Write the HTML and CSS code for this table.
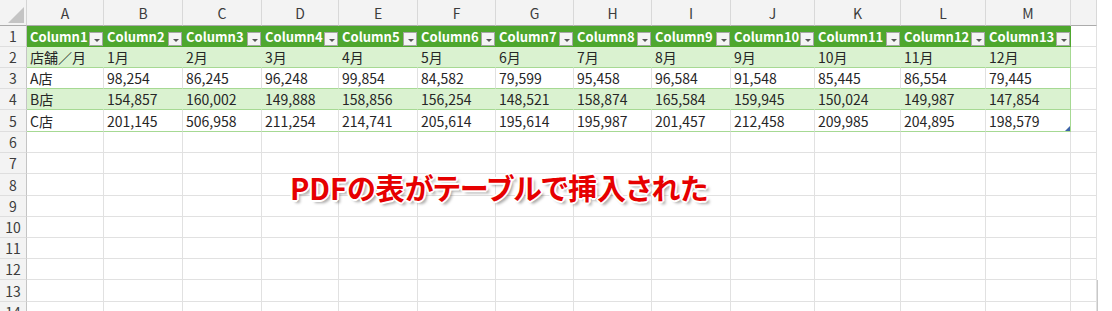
FILE: index.html
```html
<!DOCTYPE html>
<html lang="ja">
<head>
<meta charset="utf-8">
<title>Sheet</title>
<link rel="stylesheet" href="styles.css">
</head>
<body>
<div class="sheet">
  <!-- column headers -->
  <div class="corner"><span class="tri"></span></div>
  <div class="ch">A</div><div class="ch">B</div><div class="ch">C</div><div class="ch">D</div><div class="ch">E</div><div class="ch">F</div><div class="ch">G</div><div class="ch">H</div><div class="ch">I</div><div class="ch">J</div><div class="ch">K</div><div class="ch">L</div><div class="ch">M</div><div class="ch"></div><div class="fill"></div>

  <!-- row 1 -->
  <div class="rh">1</div>
  <div class="th"><span>Column1</span><span class="dd"></span></div>
  <div class="th"><span>Column2</span><span class="dd"></span></div>
  <div class="th"><span>Column3</span><span class="dd"></span></div>
  <div class="th"><span>Column4</span><span class="dd"></span></div>
  <div class="th"><span>Column5</span><span class="dd"></span></div>
  <div class="th"><span>Column6</span><span class="dd"></span></div>
  <div class="th"><span>Column7</span><span class="dd"></span></div>
  <div class="th"><span>Column8</span><span class="dd"></span></div>
  <div class="th"><span>Column9</span><span class="dd"></span></div>
  <div class="th"><span>Column10</span><span class="dd"></span></div>
  <div class="th"><span>Column11</span><span class="dd"></span></div>
  <div class="th"><span>Column12</span><span class="dd"></span></div>
  <div class="th last"><span>Column13</span><span class="dd"></span></div>
  <div class="c"></div><div class="fill"></div>

  <!-- row 2 -->
  <div class="rh">2</div>
  <div class="tb band">店舗／月</div><div class="tb band">1月</div><div class="tb band">2月</div><div class="tb band">3月</div><div class="tb band">4月</div><div class="tb band">5月</div><div class="tb band">6月</div><div class="tb band">7月</div><div class="tb band">8月</div><div class="tb band">9月</div><div class="tb band">10月</div><div class="tb band">11月</div><div class="tb band last">12月</div>
  <div class="c"></div><div class="fill"></div>

  <!-- row 3 -->
  <div class="rh">3</div>
  <div class="tb">A店</div><div class="tb">98,254</div><div class="tb">86,245</div><div class="tb">96,248</div><div class="tb">99,854</div><div class="tb">84,582</div><div class="tb">79,599</div><div class="tb">95,458</div><div class="tb">96,584</div><div class="tb">91,548</div><div class="tb">85,445</div><div class="tb">86,554</div><div class="tb last">79,445</div>
  <div class="c"></div><div class="fill"></div>

  <!-- row 4 -->
  <div class="rh">4</div>
  <div class="tb band">B店</div><div class="tb band">154,857</div><div class="tb band">160,002</div><div class="tb band">149,888</div><div class="tb band">158,856</div><div class="tb band">156,254</div><div class="tb band">148,521</div><div class="tb band">158,874</div><div class="tb band">165,584</div><div class="tb band">159,945</div><div class="tb band">150,024</div><div class="tb band">149,987</div><div class="tb band last">147,854</div>
  <div class="c"></div><div class="fill"></div>

  <!-- row 5 -->
  <div class="rh">5</div>
  <div class="tb">C店</div><div class="tb">201,145</div><div class="tb">506,958</div><div class="tb">211,254</div><div class="tb">214,741</div><div class="tb">205,614</div><div class="tb">195,614</div><div class="tb">195,987</div><div class="tb">201,457</div><div class="tb">212,458</div><div class="tb">209,985</div><div class="tb">204,895</div><div class="tb last end">198,579<span class="handle"></span></div>
  <div class="c"></div><div class="fill"></div>

  <!-- rows 6-14 -->
  <div class="rh">6</div><div class="c"></div><div class="c"></div><div class="c"></div><div class="c"></div><div class="c"></div><div class="c"></div><div class="c"></div><div class="c"></div><div class="c"></div><div class="c"></div><div class="c"></div><div class="c"></div><div class="c"></div><div class="c"></div><div class="fill"></div>
  <div class="rh">7</div><div class="c"></div><div class="c"></div><div class="c"></div><div class="c"></div><div class="c"></div><div class="c"></div><div class="c"></div><div class="c"></div><div class="c"></div><div class="c"></div><div class="c"></div><div class="c"></div><div class="c"></div><div class="c"></div><div class="fill"></div>
  <div class="rh">8</div><div class="c"></div><div class="c"></div><div class="c"></div><div class="c"></div><div class="c"></div><div class="c"></div><div class="c"></div><div class="c"></div><div class="c"></div><div class="c"></div><div class="c"></div><div class="c"></div><div class="c"></div><div class="c"></div><div class="fill"></div>
  <div class="rh">9</div><div class="c"></div><div class="c"></div><div class="c"></div><div class="c"></div><div class="c"></div><div class="c"></div><div class="c"></div><div class="c"></div><div class="c"></div><div class="c"></div><div class="c"></div><div class="c"></div><div class="c"></div><div class="c"></div><div class="fill"></div>
  <div class="rh">10</div><div class="c"></div><div class="c"></div><div class="c"></div><div class="c"></div><div class="c"></div><div class="c"></div><div class="c"></div><div class="c"></div><div class="c"></div><div class="c"></div><div class="c"></div><div class="c"></div><div class="c"></div><div class="c"></div><div class="fill"></div>
  <div class="rh">11</div><div class="c"></div><div class="c"></div><div class="c"></div><div class="c"></div><div class="c"></div><div class="c"></div><div class="c"></div><div class="c"></div><div class="c"></div><div class="c"></div><div class="c"></div><div class="c"></div><div class="c"></div><div class="c"></div><div class="fill"></div>
  <div class="rh">12</div><div class="c"></div><div class="c"></div><div class="c"></div><div class="c"></div><div class="c"></div><div class="c"></div><div class="c"></div><div class="c"></div><div class="c"></div><div class="c"></div><div class="c"></div><div class="c"></div><div class="c"></div><div class="c"></div><div class="fill"></div>
  <div class="rh">13</div><div class="c"></div><div class="c"></div><div class="c"></div><div class="c"></div><div class="c"></div><div class="c"></div><div class="c"></div><div class="c"></div><div class="c"></div><div class="c"></div><div class="c"></div><div class="c"></div><div class="c"></div><div class="c"></div><div class="fill edge"></div>
  <div class="rh">14</div><div class="c"></div><div class="c"></div><div class="c"></div><div class="c"></div><div class="c"></div><div class="c"></div><div class="c"></div><div class="c"></div><div class="c"></div><div class="c"></div><div class="c"></div><div class="c"></div><div class="c"></div><div class="c"></div><div class="fill edge"></div>
</div>

<div class="callout">PDFの表がテーブルで挿入された</div>
</body>
</html>
```
FILE: styles.css
```css
* {
  box-sizing: border-box;
  margin: 0;
  padding: 0;
}

html,
body {
  width: 1112px;
  height: 311px;
  overflow: hidden;
  background: #ffffff;
}

body {
  position: relative;
  font-family: "Noto Sans CJK JP", "Noto Sans", sans-serif;
  font-size: 14px;
  color: #262626;
}

.sheet {
  display: grid;
  grid-template-columns: 27px 77px 79px 79px 77px 79px 78px 78px 78px 79px 84px 86px 85px 85px 26px 15px;
  grid-template-rows: 26px 21px 21px 21px 21px 22px 21px 21px 22px 21px 21px 21px 21px 22px 21px;
}

.sheet > div {
  display: flex;
  align-items: center;
  white-space: nowrap;
  overflow: hidden;
  line-height: 1;
}

.corner {
  background: #f3f3f3;
  border-right: 1px solid #d4d4d4;
  border-bottom: 1px solid #ababab;
  position: relative;
}

.tri {
  position: absolute;
  right: 2px;
  bottom: 2px;
  width: 16px;
  height: 16px;
  background: #c4c4c4;
  clip-path: polygon(100% 0, 100% 100%, 0 100%);
}

.ch {
  justify-content: center;
  background: #f3f3f3;
  color: #3c3c3c;
  border-right: 1px solid #d8d8d8;
  border-bottom: 1px solid #ababab;
  padding-top: 1px;
}

.rh {
  justify-content: center;
  background: #f3f3f3;
  color: #3c3c3c;
  border-right: 1px solid #c4c4c4;
  border-bottom: 1px solid #dedede;
}

.c {
  border-right: 1px solid #e1e1e1;
  border-bottom: 1px solid #e1e1e1;
}

.fill {
  background: #ffffff;
}

.fill.edge {
  border-left: 1px solid #c8c8c8;
}

.th {
  justify-content: space-between;
  background: #4ea72e;
  color: #ffffff;
  font-size: 13px;
  font-weight: 700;
  padding: 0 1px 0 3px;
}

.dd {
  align-self: flex-end;
  flex: none;
  width: 14px;
  height: 14px;
  margin-bottom: 1px;
  background: #f4f4f4;
  border: 1px solid #a6a6a6;
  position: relative;
}

.dd::after {
  content: "";
  position: absolute;
  left: 4px;
  top: 6px;
  border-left: 3px solid transparent;
  border-right: 3px solid transparent;
  border-top: 3px solid #555555;
}

.tb {
  padding-left: 3px;
  background: #ffffff;
  border-right: 1px solid #e1e1e1;
  border-bottom: 1px solid #a6d993;
}

.tb.band {
  background: #daf2d0;
  border-right-color: #daf2d0;
}

.tb.last {
  border-right-color: #a6d993;
}

.tb.end {
  position: relative;
}

.handle {
  position: absolute;
  right: 0;
  bottom: 0;
  width: 5px;
  height: 5px;
  background: #3d63a8;
  clip-path: polygon(100% 0, 100% 100%, 0 100%);
}

.callout {
  position: absolute;
  left: 290px;
  top: 170px;
  font-size: 29px;
  font-weight: 700;
  line-height: 1.2;
  color: #e60000;
  font-feature-settings: "palt";
  text-shadow:
    -2px 0 0 #ffffff, 2px 0 0 #ffffff, 0 -2px 0 #ffffff, 0 2px 0 #ffffff,
    -1px -1px 0 #ffffff, 1px -1px 0 #ffffff, -1px 1px 0 #ffffff, 1px 1px 0 #ffffff,
    3px 3px 3px rgba(0, 0, 0, 0.35);
}
```
